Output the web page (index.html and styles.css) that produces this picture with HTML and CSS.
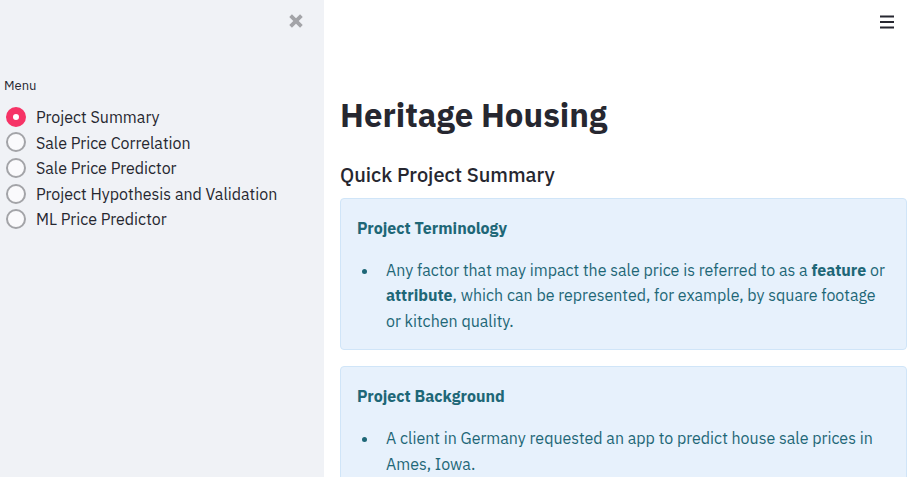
FILE: index.html
```html
<!DOCTYPE html>
<html lang="en">
<head>
<meta charset="utf-8">
<title>Heritage Housing</title>
<meta name="viewport" content="width=device-width, initial-scale=1">
<link rel="stylesheet" href="styles.css">
</head>
<body>
<div class="app">
  <aside class="sidebar">
    <button class="icon-button close" type="button" aria-label="Close sidebar">
      <svg width="16" height="16" viewBox="0 0 16 16"><path d="M2.6 2.6l10.8 10.8M13.4 2.6L2.6 13.4" fill="none" stroke="currentColor" stroke-width="3.8"/></svg>
    </button>
    <fieldset class="menu">
      <legend>Menu</legend>
      <label class="option"><input type="radio" name="page" checked>Project Summary</label>
      <label class="option"><input type="radio" name="page">Sale Price Correlation</label>
      <label class="option"><input type="radio" name="page">Sale Price Predictor</label>
      <label class="option"><input type="radio" name="page">Project Hypothesis and Validation</label>
      <label class="option"><input type="radio" name="page">ML Price Predictor</label>
    </fieldset>
  </aside>
  <main class="content">
    <header class="toolbar">
      <button class="icon-button" type="button" aria-label="Main menu">
        <svg width="14" height="14" viewBox="0 0 14 14"><path d="M0 1.5h14M0 7h14M0 12.5h14" fill="none" stroke="currentColor" stroke-width="2"/></svg>
      </button>
    </header>
    <h1>Heritage Housing</h1>
    <h2>Quick Project Summary</h2>
    <section class="notice">
      <h3>Project Terminology</h3>
      <ul>
        <li>Any factor that may impact the sale price is referred to as a <strong>feature</strong> or <strong>attribute</strong>, which can be represented, for example, by square footage or kitchen quality.</li>
      </ul>
    </section>
    <section class="notice">
      <h3>Project Background</h3>
      <ul>
        <li>A client in Germany requested an app to predict house sale prices in Ames, Iowa.</li>
      </ul>
    </section>
  </main>
</div>
</body>
</html>
```
FILE: styles.css
```css
* {
  box-sizing: border-box;
}

body {
  margin: 0;
  overflow: hidden;
  background: #fff;
  color: #262730;
  font: 16px/1.6 "IBM Plex Sans", "Noto Sans", sans-serif;
}

.app {
  display: flex;
  height: 100vh;
}

.sidebar {
  display: flex;
  flex: 0 0 324px;
  flex-direction: column;
  background: #f0f2f6;
}

.icon-button {
  display: flex;
  padding: 0;
  border: 0;
  background: none;
  color: #262730;
}

.close {
  align-self: flex-end;
  margin: 13px 20px 0 0;
  color: #a3a4a8;
}

.menu {
  margin: 47px 0 0;
  padding: 0 4px;
  border: 0;
}

.menu legend {
  padding: 0;
  margin-bottom: 9px;
  font-size: 13px;
  line-height: 20px;
}

.option {
  display: flex;
  align-items: center;
  gap: 10px;
}

.option input {
  width: 20px;
  height: 20px;
  margin: 0 0 2px 2px;
  appearance: none;
  border: 2px solid #a3a4a8;
  border-radius: 50%;
  background: #fafafc;
}

.option input:checked {
  border: 7px solid #f63366;
  background: #fff;
}

.content {
  flex: 1;
  min-width: 0;
  padding-left: 16px;
}

.toolbar {
  display: flex;
  justify-content: flex-end;
  padding: 15px 13px;
}

h1,
h2,
h3 {
  margin: 0;
}

h1 {
  margin-top: 48px;
  font-size: 33px;
  font-weight: 700;
  line-height: 46px;
}

h2 {
  margin: 23px 0 9px;
  font-size: 20px;
  font-weight: 500;
  line-height: 28px;
}

.notice {
  margin-bottom: 16px;
  padding: 17px 16px 15px;
  border: 1px solid #d0e5f8;
  border-radius: 4px;
  background: #e7f1fc;
  color: #1e6777;
}

.notice h3 {
  margin-bottom: 16px;
  font-size: 16px;
  font-weight: 700;
}

.notice ul {
  margin: 0;
  padding-left: 22px;
}

.notice li {
  padding-left: 7px;
}
```
